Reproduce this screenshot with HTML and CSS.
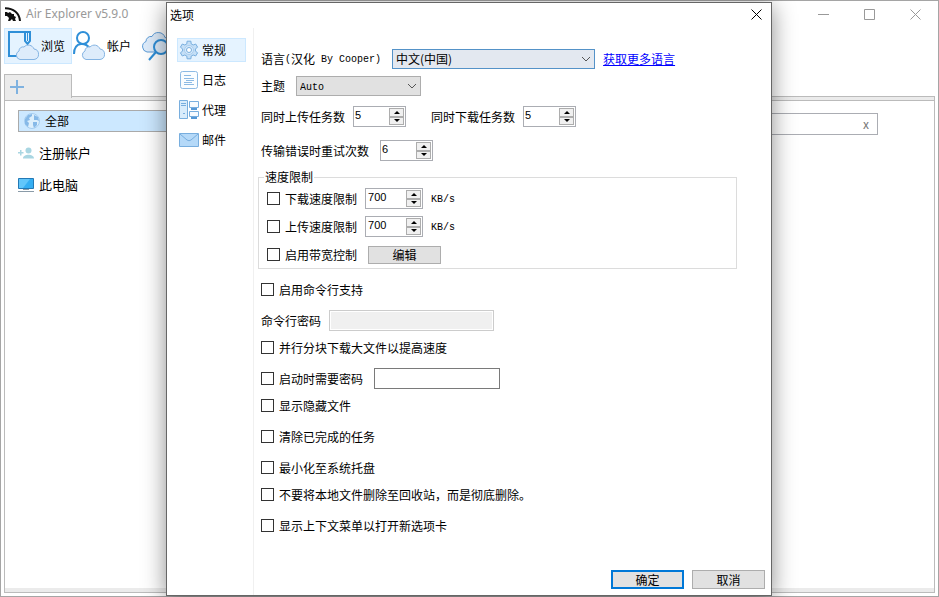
FILE: index.html
```html
<!DOCTYPE html>
<html lang="zh-CN">
<head>
    <meta charset="UTF-8">
    <meta name="viewport" content="width=device-width, initial-scale=1.0">
    <title>Air Explorer v5.9.0</title>
    <link rel="stylesheet" href="styles.css">
</head>
<body>
    <div class="app">
        <header class="titlebar">
            <svg class="logo" width="16" height="16" viewBox="0 0 16 16">
                <path d="M0 2.200C8 2 14.500 7 15 15" fill="none" stroke="#111" stroke-width="2"/>
                <path d="M0 6h2l1 1 2-1 2 2 2 0v2l2 1-1 2 1 2H8l-1-2-2 2H3l1-3-2-2-2 0z" fill="#111"/>
            </svg>
            <h1>Air Explorer v5.9.0</h1>
            <div class="window-buttons">
                <button aria-label="最小化"><svg width="11" height="11"><path d="M0 5.5h11"/></svg></button>
                <button aria-label="最大化"><svg width="11" height="11"><path d="M.5.5h10v10H.5z"/></svg></button>
                <button aria-label="关闭"><svg width="11" height="11"><path d="M.5.5l10 10M10.5.5l-10 10"/></svg></button>
            </div>
        </header>

        <nav class="toolbar">
            <button class="tool active">
                <svg width="32" height="32" viewBox="0 0 32 32">
                    <path d="M10 26H2V2h20M18 1v10l2.500 3 2.500-3V1" fill="none" stroke="#2f8fd8" stroke-width="2"/>
                    <path d="M20.500 2v9" stroke="#2f8fd8"/>
                    <path d="M13 29.500a4.500 4.500 0 0 1-1-8.500 4 4 0 0 1 5-4 6 6 0 0 1 10 2 5.300 5.300 0 0 1 0 10.500z" fill="#deecfb" stroke="#85b4e3"/>
                </svg>
                <span>浏览</span>
            </button>
            <button class="tool">
                <svg width="32" height="32" viewBox="0 0 32 32">
                    <circle cx="10" cy="8" r="6" fill="none" stroke="#2f8fd8" stroke-width="2"/>
                    <path d="M1 24C1 11 14 12 17 19" fill="none" stroke="#2f8fd8" stroke-width="2"/>
                    <path d="M13 29.500a4.500 4.500 0 0 1-1-8.500 4 4 0 0 1 5-4 6 6 0 0 1 10 2 5.300 5.300 0 0 1 0 10.500z" fill="#deecfb" stroke="#85b4e3"/>
                </svg>
                <span>帐户</span>
            </button>
            <button class="tool">
                <svg width="32" height="32" viewBox="0 0 32 32">
                    <path d="M6 22a5.500 5.500 0 0 1-1-10.500 5 5 0 0 1 6-5 7 7 0 0 1 13 1 7 7 0 0 1 0 14.500z" fill="#deecfb" stroke="#5c9cd8"/>
                    <circle cx="20" cy="17" r="7" fill="#deecfb" stroke="#2f8fd8" stroke-width="2"/>
                    <path d="M15 22l-7 8" stroke="#2f8fd8" stroke-width="2"/>
                </svg>
                <span>搜索</span>
            </button>
        </nav>

        <div class="tabs">
            <button class="tab" aria-label="新建选项卡">
                <svg width="14" height="14"><path d="M7 0v14M0 7h14" stroke="#7fb2e0" stroke-width="2"/></svg>
            </button>
        </div>

        <main class="panel">
            <ul class="tree">
                <li class="all">
                    <svg width="16" height="16" viewBox="0 0 16 16">
                        <circle cx="8" cy="8" r="7.500" fill="#ddeffc" stroke="#a5cdf0"/>
                        <path d="M1 6l3-4 4-1 0 2-3 2 1 2-3 1 2 2-1 4-3-3zM10 2l4 2 1 4-2-1-3 0 0-2zM9 9l4 0 0 3-3 3-1-3z" fill="#86b9e8"/>
                    </svg>
                    <span>全部</span>
                </li>
                <li>
                    <svg width="16" height="16" viewBox="0 0 16 16" fill="#a9d6e2">
                        <circle cx="10.500" cy="5.500" r="3"/>
                        <path d="M5 13.500c0-5 11-5 11 0zM2 5h1.500v2H5.500v1.500h-2v2H2v-2H0V7h2z"/>
                    </svg>
                    <span>注册帐户</span>
                </li>
                <li>
                    <svg width="16" height="16" viewBox="0 0 16 16">
                        <path d="M.5 1.500h15v10H.5z" fill="#35aef2" stroke="#2379b5"/>
                        <path d="M1 2h11l-7 9H1z" fill="#62c6fa"/>
                        <path d="M5 12.500h6M0 14.500h16" stroke="#8a9ba8"/>
                    </svg>
                    <span>此电脑</span>
                </li>
            </ul>
            <div class="search">
                <input type="text" aria-label="搜索">
                <button aria-label="清除">x</button>
            </div>
        </main>
    </div>

    <div class="dialog" role="dialog" aria-labelledby="dialog-title">
        <div class="dialog-title">
            <h2 id="dialog-title">选项</h2>
            <button aria-label="关闭"><svg width="11" height="11"><path d="M.5.5l10 10M10.500.5l-10 10"/></svg></button>
        </div>

        <div class="dialog-body">
            <nav class="sections">
                <button class="section active">
                    <svg width="20" height="20" viewBox="0 0 20 20" fill="#c5dff6" stroke="#78aede">
                        <path d="M7.800 3.900L8.100 1.200h3.800l.3 2.700L14.200 5 16.700 4 18.600 7.200 16.400 8.900v2.200L18.600 12.800 16.700 16 14.200 15 12.200 16.100 11.900 18.800H8.100L7.800 16.100 5.800 15 3.300 16 1.400 12.800 3.600 11.100V8.900L1.400 7.200 3.300 4 5.800 5z"/>
                        <circle cx="10" cy="10" r="4.500" fill="#d9ebfb" stroke="#a9cdee"/>
                        <circle cx="10" cy="10" r="2.500" fill="#fff"/>
                    </svg>
                    <span>常规</span>
                </button>
                <button class="section">
                    <svg width="20" height="20" viewBox="0 0 20 20" fill="none" stroke="#8dbae4">
                        <rect x="1.500" y="1.500" width="17" height="17" rx="2" fill="#fafdff"/>
                        <path d="M5 5.500h7M5 8.500h10M7 10.500h8M5 12.500h8M5 14.500h10"/>
                    </svg>
                    <span>日志</span>
                </button>
                <button class="section">
                    <svg width="20" height="20" viewBox="0 0 20 20" fill="#d9ecfb" stroke="#78aede">
                        <path d="M.5.5h8v18h-8z"/>
                        <path d="M2 3.500h5M2 5.500h5M4 13.500h2"/>
                        <path d="M10.500 1.500h9v6h-9zM10.500 11.500h9v5h-9z" fill="#f7fbff"/>
                        <path d="M12 9h6M12 18h6" stroke="#5598d6" stroke-width="2"/>
                    </svg>
                    <span>代理</span>
                </button>
                <button class="section">
                    <svg width="20" height="20" viewBox="0 0 20 20" fill="#b5d9f8" stroke="#78aede">
                        <path d="M.5 3.500h19v13H.5z"/>
                        <path d="M1 4l7 6q2 1.500 4 0l7-6" fill="none"/>
                    </svg>
                    <span>邮件</span>
                </button>
            </nav>

            <form class="options">
                <div class="row roomy">
                    <label for="language">语言<span class="latin">(</span>汉化<span class="latin"> By Cooper)</span></label>
                    <select id="language" class="language"><option>中文(中国)</option></select>
                    <a href="#">获取更多语言</a>
                </div>
                <div class="row tight roomy">
                    <label for="theme">主题</label>
                    <select id="theme" class="theme"><option>Auto</option></select>
                </div>
                <div class="row">
                    <label for="uploads">同时上传任务数</label>
                    <span class="spin">
                        <input type="number" id="uploads" value="5">
                        <span class="arrows"><button type="button" aria-label="增加"></button><button type="button" aria-label="减少"></button></span>
                    </span>
                    <label for="downloads" class="second">同时下载任务数</label>
                    <span class="spin">
                        <input type="number" id="downloads" value="5">
                        <span class="arrows"><button type="button" aria-label="增加"></button><button type="button" aria-label="减少"></button></span>
                    </span>
                </div>
                <div class="row wide roomy">
                    <label for="retries">传输错误时重试次数</label>
                    <span class="spin">
                        <input type="number" id="retries" value="6">
                        <span class="arrows"><button type="button" aria-label="增加"></button><button type="button" aria-label="减少"></button></span>
                    </span>
                </div>

                <fieldset>
                    <legend>速度限制</legend>
                    <div class="row">
                        <label><input type="checkbox">下载速度限制</label>
                        <span class="spin speed">
                            <input type="number" aria-label="下载速度" value="700">
                            <span class="arrows"><button type="button" aria-label="增加"></button><button type="button" aria-label="减少"></button></span>
                        </span>
                        <span class="latin">KB/s</span>
                    </div>
                    <div class="row">
                        <label><input type="checkbox">上传速度限制</label>
                        <span class="spin speed">
                            <input type="number" aria-label="上传速度" value="700">
                            <span class="arrows"><button type="button" aria-label="增加"></button><button type="button" aria-label="减少"></button></span>
                        </span>
                        <span class="latin">KB/s</span>
                    </div>
                    <div class="row roomy">
                        <label><input type="checkbox">启用带宽控制</label>
                        <button type="button" class="btn">编辑</button>
                    </div>
                </fieldset>

                <div class="row">
                    <label><input type="checkbox">启用命令行支持</label>
                </div>
                <div class="row">
                    <label for="cmd-password">命令行密码</label>
                    <input type="password" id="cmd-password" class="cmd-password" disabled>
                </div>
                <div class="row tight">
                    <label><input type="checkbox">并行分块下载大文件以提高速度</label>
                </div>
                <div class="row roomy">
                    <label><input type="checkbox">启动时需要密码</label>
                    <input type="password" class="start-password" aria-label="启动密码">
                </div>
                <div class="row tight">
                    <label><input type="checkbox">显示隐藏文件</label>
                </div>
                <div class="row">
                    <label><input type="checkbox">清除已完成的任务</label>
                </div>
                <div class="row">
                    <label><input type="checkbox">最小化至系统托盘</label>
                </div>
                <div class="row tight">
                    <label><input type="checkbox">不要将本地文件删除至回收站，而是彻底删除。</label>
                </div>
                <div class="row">
                    <label><input type="checkbox">显示上下文菜单以打开新选项卡</label>
                </div>

                <div class="actions">
                    <button type="button" class="btn primary">确定</button>
                    <button type="button" class="btn">取消</button>
                </div>
            </form>
        </div>
    </div>
</body>
</html>
```
FILE: styles.css
```css
* {
    box-sizing: border-box;
}

body {
    margin: 0;
    height: 100vh;
    position: relative;
    overflow: hidden;
    background: #fff;
    color: #000;
    font-family: "Noto Sans CJK SC", sans-serif;
    font-size: 12px;
    line-height: 18px;
}

button, input, select {
    font: inherit;
    color: inherit;
    margin: 0;
    padding: 0;
    border-radius: 0;
}

button {
    border: none;
    background: none;
}

svg {
    flex: none;
    display: block;
}

/* main window */
.app {
    height: 100vh;
    display: flex;
    flex-direction: column;
    padding: 0 3px 3px;
    border: 1px solid #a5a5a5;
}

.titlebar {
    display: flex;
    align-items: center;
    height: 26px;
    padding-left: 1px;
    margin-right: -3px;
}

.titlebar h1 {
    flex: 1;
    margin: 0 0 0 5px;
    color: #999;
    font-family: "Noto Sans", sans-serif;
    font-size: 12px;
    font-weight: normal;
}

.window-buttons {
    display: flex;
}

.window-buttons button {
    width: 46px;
    height: 26px;
}

.window-buttons svg {
    margin: 0 auto;
    fill: none;
    stroke: #999;
}

.toolbar {
    display: flex;
    margin-top: 1px;
    height: 36px;
}

.tool {
    display: flex;
    align-items: center;
    gap: 2px;
    width: 68px;
    padding-left: 2px;
    border: 1px solid transparent;
    white-space: nowrap;
}

.tool + .tool {
    padding-left: 0;
}

.tool.active, .section.active {
    background: #e5f3ff;
    border-color: #cce8ff;
}

.tabs {
    margin-top: 10px;
    height: 22px;
    position: relative;
}

.tab {
    width: 68px;
    height: 24px;
    padding-left: 5px;
    background: #ebebeb;
    border: 1px solid #bbb;
    border-bottom: none;
}

.panel {
    flex: 1;
    display: flex;
    align-items: flex-start;
    border: 1px solid #bbb;
    border-top: none;
    padding-top: 10px;
    box-shadow: inset 0 1px #bbb, inset 0 4px #ebebeb, inset 0 5px #bbb, inset 0 -4px #ebebeb;
}

.tree {
    width: 220px;
    margin: 4px 0 0;
    padding: 0 0 0 13px;
    list-style: none;
    font-size: 13px;
}

.tree li {
    display: flex;
    align-items: center;
    gap: 5px;
    height: 22px;
    margin-bottom: 10px;
}

.tree .all {
    padding-left: 5px;
    background: #cce8ff;
    border: 1px solid #aaa;
    font-size: 12px;
}

.search {
    flex: 1;
    display: flex;
    height: 22px;
    margin: 7px 56px 0 20px;
    border: 1px solid #abadb3;
}

.search input {
    flex: 1;
    border: none;
}

.search button {
    width: 22px;
    color: #777;
}

/* options dialog */
.dialog {
    position: absolute;
    inset: 2px 167px 1px 166px;
    display: flex;
    flex-direction: column;
    background: #fff;
    border: 1px solid #666;
    box-shadow: 0 4px 22px rgba(0, 0, 0, 0.45);
}

.dialog-title {
    display: flex;
    justify-content: space-between;
    align-items: center;
    height: 23px;
    margin-bottom: 2px;
    padding: 0 9px 0 3px;
}

.dialog-title h2 {
    margin: 0;
    font-size: 12px;
    font-weight: normal;
}

.dialog-title svg {
    fill: none;
    stroke: #000;
}

.dialog-body {
    flex: 1;
    display: flex;
}

.sections {
    display: flex;
    flex-direction: column;
    gap: 6px;
    width: 87px;
    padding: 10px 7px 0 10px;
    border-right: 1px solid #f0f0f0;
}

.section {
    display: flex;
    align-items: center;
    gap: 3px;
    height: 24px;
    padding-left: 1px;
    border: 1px solid transparent;
}

.options {
    flex: 1;
    display: flex;
    flex-direction: column;
    padding: 10px 6px 6px 4px;
}

.row {
    display: flex;
    align-items: center;
    gap: 8px;
    height: 21px;
    margin-top: 10px;
    padding-left: 3px;
    white-space: nowrap;
}

.row.tight {
    margin-top: 6px;
}

.row.wide {
    margin-top: 13px;
}

.row.roomy {
    gap: 11px;
}

.row label {
    display: flex;
    align-items: center;
    white-space: pre;
}

.row .second {
    margin-left: 17px;
}

.latin, .theme {
    font-family: "Liberation Mono", monospace;
    font-size: 10px;
}

.latin {
    padding-top: 3px;
}

.row a {
    color: #00f;
    margin-left: -3px;
}

input[type="checkbox"] {
    appearance: none;
    width: 13px;
    height: 13px;
    margin-right: 5px;
    background: #fff;
    border: 1px solid #333;
}

input[type="checkbox"]:checked {
    background: #333;
}

select {
    appearance: none;
    height: 20px;
    padding-left: 3px;
    border: 1px solid #adadad;
    background: #e1e1e1 url("data:image/svg+xml,%3Csvg xmlns='http://www.w3.org/2000/svg' width='10' height='6'%3E%3Cpath d='M1 1l4 4 4-4' fill='none' stroke='%23555'/%3E%3C/svg%3E") no-repeat right 3px center;
}

.language {
    width: 203px;
    background-color: #e3e8f0;
    border-color: #5492c8;
}

.theme {
    width: 125px;
    padding-top: 2px;
}

.spin {
    display: flex;
    width: 53px;
    height: 21px;
    padding: 1px;
    border: 1px solid #abadb3;
}

.spin.speed {
    width: 58px;
}

.spin input {
    flex: 1;
    min-width: 0;
    height: 14px;
    border: none;
    appearance: textfield;
    font-family: "Liberation Sans", sans-serif;
    font-size: 11px;
    line-height: 14px;
}

.spin.speed input {
    padding-left: 1px;
}

.spin input::-webkit-inner-spin-button {
    appearance: none;
}

.arrows {
    display: flex;
    flex-direction: column;
    width: 15px;
}

.arrows button {
    flex: 1;
    display: flex;
    align-items: center;
    justify-content: center;
    background: #f0f0f0;
    border: 1px solid #adadad;
}

.arrows button::before {
    content: "";
    border: 3px solid transparent;
    border-top: none;
    border-bottom: 3px solid #000;
}

.arrows button:last-child::before {
    border-bottom: none;
    border-top: 3px solid #000;
}

fieldset {
    margin: 7px 28px 0 0;
    padding: 0 0 3px 5px;
    border: 1px solid #dcdcdc;
    min-width: 0;
}

legend {
    padding: 0 1px;
}

fieldset .row {
    margin-top: 7px;
}

fieldset .row:first-of-type {
    margin-top: 2px;
}

.cmd-password, .start-password {
    height: 21px;
    border: 1px solid #7a7a7a;
}

.cmd-password {
    width: 165px;
    background: #f0f0f0;
    border-color: #ccc;
    box-shadow: inset 0 0 0 1px #fff;
}

.start-password {
    width: 126px;
}

.btn {
    width: 73px;
    height: 18px;
    line-height: 16px;
    background: #e1e1e1;
    border: 1px solid #adadad;
}

.btn.primary {
    border: 2px solid #0078d7;
}

.actions {
    display: flex;
    justify-content: flex-end;
    gap: 8px;
    margin-top: auto;
}

.actions .btn {
    height: 19px;
    line-height: 15px;
}
```
